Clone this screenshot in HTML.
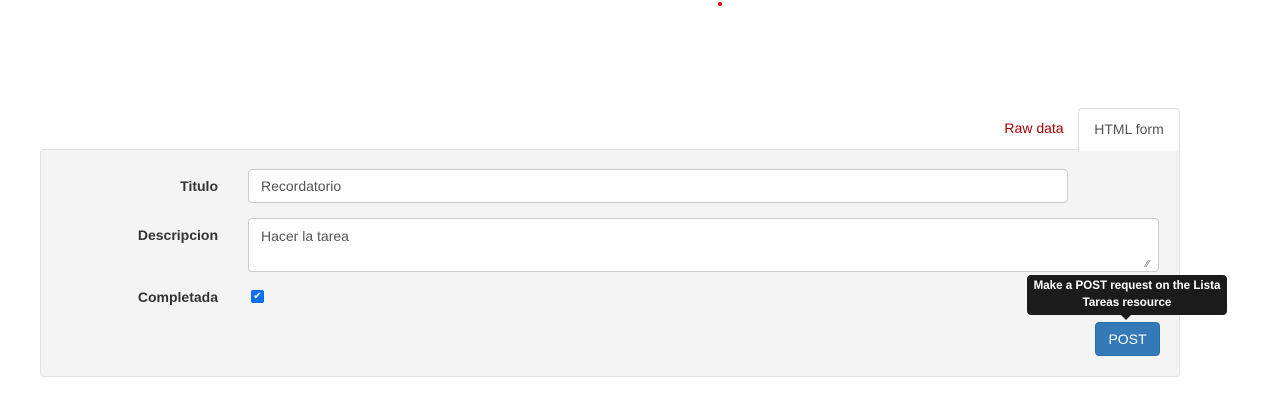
<!DOCTYPE html>
<html><head><style>
body{margin:0;width:1286px;height:402px;background:#fff;font-family:"Liberation Sans",sans-serif;font-size:14px;color:#333;position:relative;overflow:hidden}
.a{position:absolute}
.dot{left:718px;top:2px;width:4px;height:4px;border-radius:50%;background:#e00}
.tab1{left:990px;top:107px;width:88px;height:42px;line-height:42px;text-align:center;color:#a00;}
.tab2{left:1078px;top:108px;width:100px;height:42px;line-height:40px;text-align:center;color:#555;border:1px solid #ddd;border-bottom:none;border-radius:4px 4px 0 0;background:#fff;z-index:2}
.well{left:40px;top:149px;width:1138px;height:226px;background:#f4f4f4;border:1px solid #e3e3e3;border-radius:4px}
.lbl{font-weight:bold;text-align:right;width:178px;left:40px}
.in{background:#fff;border:1px solid #ccc;border-radius:4px;box-sizing:border-box;padding:0 12px;color:#555;font-size:14px}
.btn{left:1095px;top:322px;width:65px;height:34px;background:#337ab7;border:1px solid #2e6da4;border-radius:4px;box-sizing:border-box;color:#fff;text-align:center;line-height:32px}
.tip{left:1027px;top:275px;width:200px;height:40px;background:#1b1b1b;border-radius:4px;color:#fff;font-size:11.6px;font-weight:bold;text-align:center;line-height:17px;padding-top:2px;box-sizing:border-box}
.arr{left:1121px;top:315px;width:0;height:0;border-left:5px solid transparent;border-right:5px solid transparent;border-top:5px solid #1b1b1b}
.cb{left:251px;top:290px;width:13px;height:13px;background:#0b6ef0;border-radius:2px;color:#fff;font-size:10px;line-height:13px;text-align:center}
</style></head><body>
<div class="a dot"></div>
<div class="a tab1">Raw data</div>
<div class="a tab2">HTML form</div>
<div class="a well"></div>
<div class="a lbl" style="top:178px">Titulo</div>
<div class="a in" style="left:248px;top:169px;width:820px;height:34px;line-height:32px">Recordatorio</div>
<div class="a lbl" style="top:227px">Descripcion</div>
<div class="a in" style="left:248px;top:218px;width:911px;height:54px;padding-top:9px">Hacer la tarea</div>
<div class="a" style="left:1146px;top:259px;color:#666;font-size:10px">⁄⁄</div>
<div class="a lbl" style="top:289px">Completada</div>
<div class="a cb">✔</div>
<div class="a tip">Make a POST request on the Lista<br>Tareas resource</div>
<div class="a arr"></div>
<div class="a btn">POST</div>
</body></html>
